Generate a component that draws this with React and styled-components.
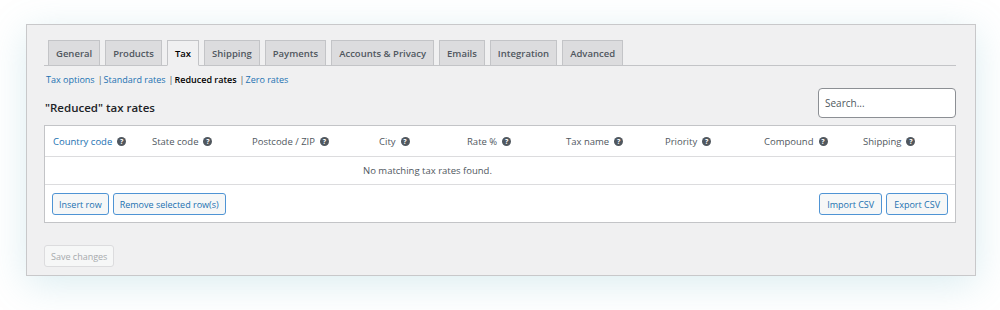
import React from "react"
import styled, { createGlobalStyle } from "styled-components"

const GlobalStyle = createGlobalStyle`
  body {
    margin: 0;
    background: #ffffff;
    font-family: "Open Sans", "Noto Sans", sans-serif;
  }
`

const Page = styled.div`
  width: 1000px;
  height: 310px;
  padding: 24px 0 0 26px;
  box-sizing: border-box;
`

const Panel = styled.div`
  width: 950px;
  height: 252px;
  box-sizing: border-box;
  background: #f0f0f1;
  border: 1px solid #c8c8ca;
  box-shadow: 0 8px 36px rgba(110, 185, 200, 0.25);
  padding: 15px 19px 0 17px;
`

const TabNav = styled.nav`
  display: flex;
  gap: 5px;
  padding-left: 4px;
  height: 26px;
  box-sizing: border-box;
  border-bottom: 1px solid #c3c4c7;
`

const Tab = styled.a`
  display: flex;
  align-items: center;
  height: 26px;
  box-sizing: border-box;
  padding: 0 7px;
  border: 1px solid #c3c4c7;
  border-bottom-color: ${p => (p.$active ? "#f0f0f1" : "#c3c4c7")};
  background: ${p => (p.$active ? "#f0f0f1" : "#dcdcde")};
  color: ${p => (p.$active ? "#000" : "#50575e")};
  font-size: 9.5px;
  font-weight: 600;
  white-space: nowrap;
`

const SubNav = styled.div`
  display: flex;
  align-items: center;
  margin-top: 6px;
  padding-left: 2px;
  height: 14px;
  font-size: 9px;
  color: #50575e;
`

const SubLink = styled.span`
  color: ${p => (p.$current ? "#000" : "#2271b1")};
  font-weight: ${p => (p.$current ? 600 : 400)};
`

const Sep = styled.span`
  margin: 0 1px 0 3px;
`

const HeadRow = styled.div`
  display: flex;
  justify-content: space-between;
  align-items: center;
  margin-top: 2px;
`

const Heading = styled.h2`
  margin: 8px 0 0 1px;
  font-size: 11.5px;
  font-weight: 600;
  color: #1d2327;
`

const Search = styled.input`
  width: 138px;
  height: 30px;
  box-sizing: border-box;
  border: 1px solid #8c8f94;
  border-radius: 4px;
  padding: 0 6px;
  font-family: inherit;
  font-size: 10px;
  color: #2c3338;
  background: #fff;
  &::placeholder {
    color: #50575e;
  }
`

const Table = styled.div`
  margin-top: 7px;
  background: #fff;
  border: 1px solid #c3c4c7;
  font-size: 9.5px;
`

const HeaderRow = styled.div`
  display: flex;
  height: 30px;
  align-items: center;
  border-bottom: 1px solid #dcdcde;
`

const Th = styled.div`
  display: flex;
  align-items: center;
  gap: 5px;
  width: ${p => p.$w}px;
  padding-left: 8px;
  box-sizing: border-box;
  color: ${p => (p.$sorted ? "#2271b1" : "#50575e")};
  white-space: nowrap;
`

const Help = styled.span`
  display: inline-flex;
  align-items: center;
  justify-content: center;
  width: 9px;
  height: 9px;
  border-radius: 50%;
  background: #50575e;
  color: #fff;
  font-size: 7px;
  font-weight: 700;
  line-height: 1;
`

const EmptyRow = styled.div`
  height: 27px;
  display: flex;
  align-items: center;
  padding-left: 318px;
  color: #50575e;
  border-bottom: 1px solid #dcdcde;
`

const Footer = styled.div`
  display: flex;
  justify-content: space-between;
  padding: 8px 7px 7px 7px;
`

const ButtonGroup = styled.div`
  display: flex;
  gap: 4px;
`

const Button = styled.button`
  height: 22px;
  padding: 0 ${p => (p.$wide ? 7 : 6)}px;
  border: 1px solid #4f94d4;
  border-radius: 3px;
  background: #f6f7f7;
  color: #2271b1;
  font-family: inherit;
  font-size: 9px;
  white-space: nowrap;
`

const SaveButton = styled(Button)`
  margin-top: 22px;
  border-color: #dcdcde;
  color: #a7aaad;
  background: #f6f7f7;
`

const tabs = [
  "General",
  "Products",
  "Tax",
  "Shipping",
  "Payments",
  "Accounts & Privacy",
  "Emails",
  "Integration",
  "Advanced",
]

const columns = [
  { label: "Country code", w: 99, sorted: true },
  { label: "State code", w: 100 },
  { label: "Postcode / ZIP", w: 127 },
  { label: "City", w: 88 },
  { label: "Rate %", w: 99 },
  { label: "Tax name", w: 99 },
  { label: "Priority", w: 99 },
  { label: "Compound", w: 99 },
  { label: "Shipping", w: 99 },
]

const sections = ["Tax options", "Standard rates", "Reduced rates", "Zero rates"]

const App = () => (
  <Page>
    <GlobalStyle />
    <Panel>
      <TabNav>
        {tabs.map(t => (
          <Tab key={t} $active={t === "Tax"}>{t}</Tab>
        ))}
      </TabNav>

      <SubNav>
        {sections.map((s, i) => (
          <React.Fragment key={s}>
            {i > 0 && <Sep>|</Sep>}
            <SubLink $current={s === "Reduced rates"}>{s}</SubLink>
          </React.Fragment>
        ))}
      </SubNav>

      <HeadRow>
        <Heading>"Reduced" tax rates</Heading>
        <Search placeholder="Search..." />
      </HeadRow>

      <Table>
        <HeaderRow>
          {columns.map(c => (
            <Th key={c.label} $w={c.w} $sorted={!!c.sorted}>
              {c.label} <Help>?</Help>
            </Th>
          ))}
        </HeaderRow>
        <EmptyRow>No matching tax rates found.</EmptyRow>
        <Footer>
          <ButtonGroup>
            <Button>Insert row</Button>
            <Button>Remove selected row(s)</Button>
          </ButtonGroup>
          <ButtonGroup>
            <Button $wide>Import CSV</Button>
            <Button $wide>Export CSV</Button>
          </ButtonGroup>
        </Footer>
      </Table>

      <SaveButton disabled>Save changes</SaveButton>
    </Panel>
  </Page>
)

export default App
